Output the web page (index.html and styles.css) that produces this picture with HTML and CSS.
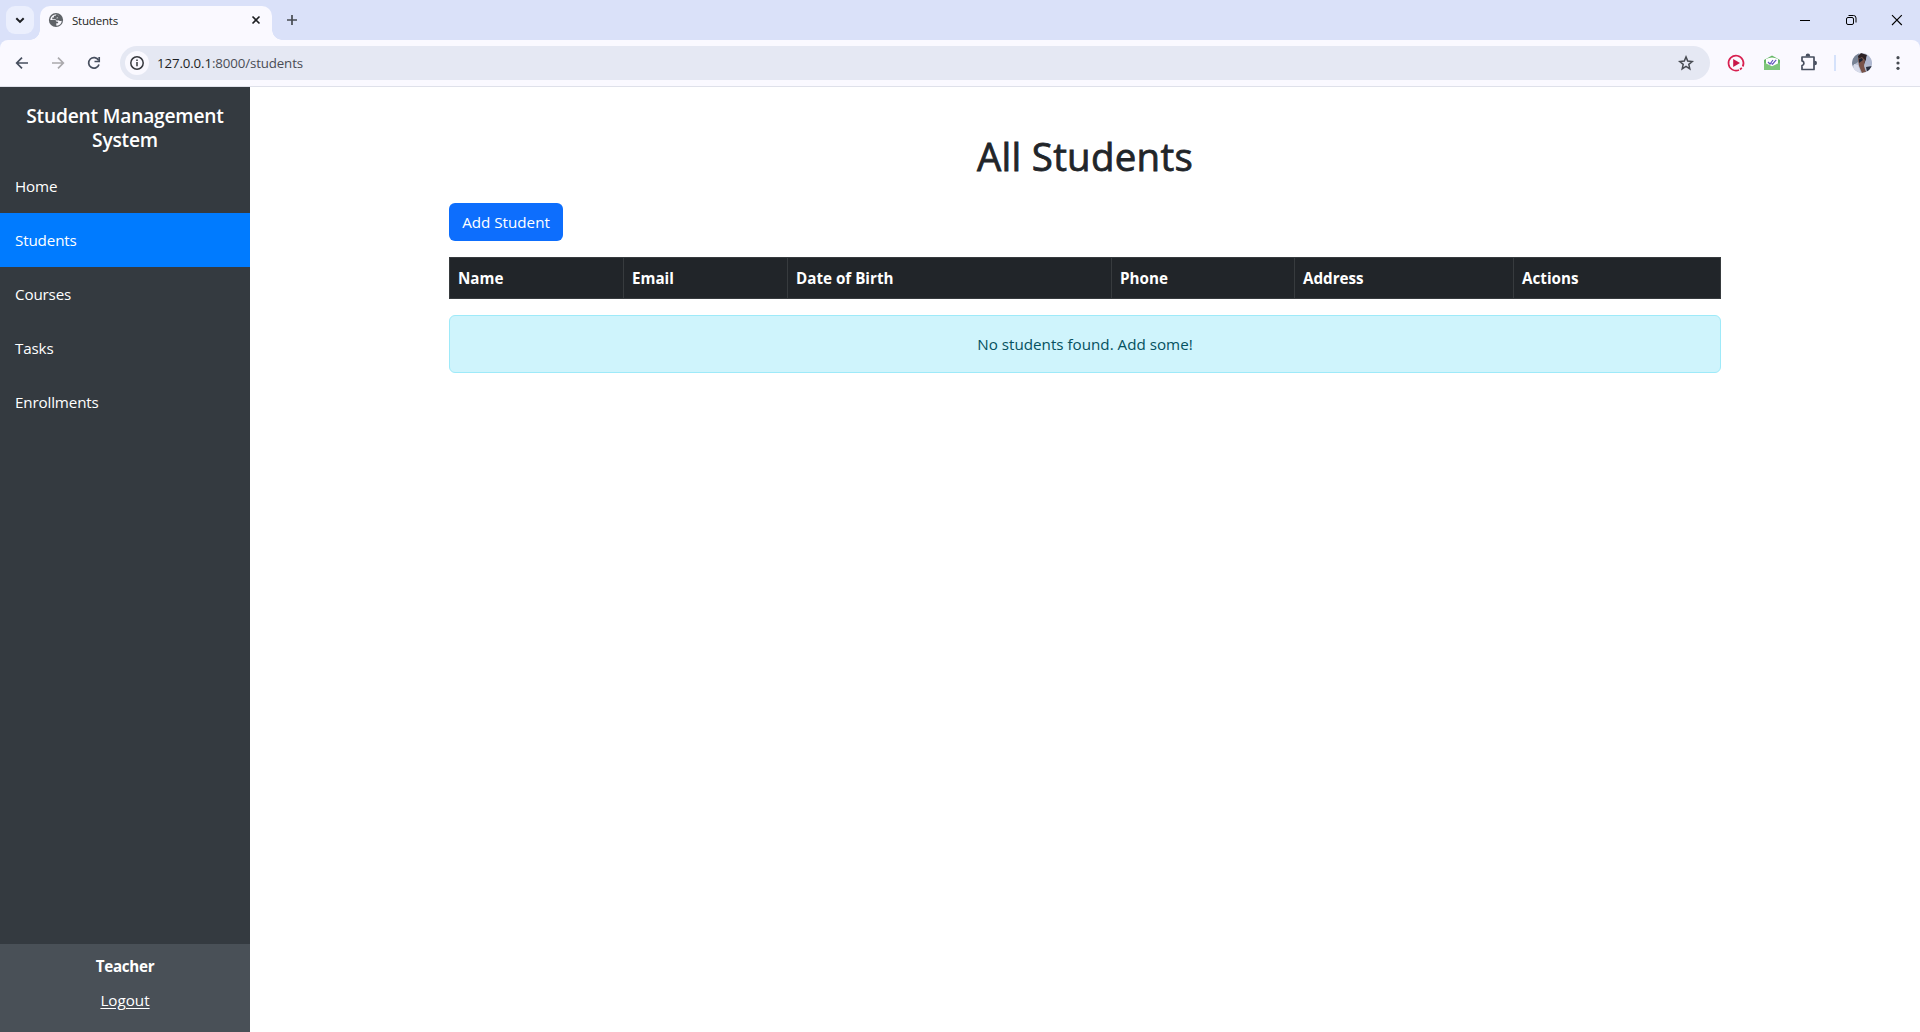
FILE: index.html
```html
<!DOCTYPE html>
<html lang="en">
<head>
<meta charset="utf-8">
<title>Students</title>
<link rel="stylesheet" href="styles.css">
</head>
<body>
<div class="browser">
  <header class="tabstrip">
    <div class="tab-search">
      <svg width="28" height="28" viewBox="0 0 28 28" fill="none" stroke="#1d1f23" stroke-width="2"><path d="M10.3 12.2 14 15.9l3.7-3.7"/></svg>
    </div>
    <div class="tab">
      <svg class="globe" width="16" height="16" viewBox="0 0 16 16"><circle cx="8" cy="8" r="7.1" fill="#5f6368"/><path d="M2.300 8h4.200c1.300 0 1.900.7 1.900 1.700h1.700v1.500H8.300v2.400c3 .3 5.300-2 5.400-4.900-1 .7-2.600.5-3.100-.7H8.500V6.300h1.700c0-1.100-.6-1.400-.3-2.100.2-.5.8-.7.8-1.200C7 1.200 2.600 3.500 2.300 8z" fill="#faf9ff"/><path d="M8.700 2.200 7.500 3.700H5.900v1.800H4.300v1.700h2.600c1.600 0 1.500 1.400 1.500 1.400h2.200V6.900H8.700V5.400h1.500V4l.7-1.200z" fill="#5f6368"/></svg>
      <span class="tab-title">Students</span>
      <svg class="tab-close" width="16" height="16" viewBox="0 0 16 16" stroke="#1d1f23" stroke-width="1.6"><path d="m4.500 4.500 7 7m0-7-7 7"/></svg>
    </div>
    <svg class="new-tab" width="16" height="16" viewBox="0 0 16 16" stroke="#474b52" stroke-width="1.7"><path d="M8 3v10M3 8h10"/></svg>
    <div class="window-controls">
      <svg width="46" height="40" viewBox="0 0 46 40" stroke="#000" fill="none"><path d="M18 20.500h10"/></svg>
      <svg width="46" height="40" viewBox="0 0 46 40" stroke="#000" fill="none"><rect x="18.500" y="17.500" width="7" height="7" rx="1.500"/><path d="M20.500 15.500h5a2.500 2.500 0 0 1 2.500 2.500v4.500"/></svg>
      <svg width="46" height="40" viewBox="0 0 46 40" stroke="#000" stroke-width="1.100" fill="none"><path d="m18 15.200 9.800 9.800m0-9.800L18 25"/></svg>
    </div>
  </header>
  <div class="toolbar">
    <svg class="tool" viewBox="0 0 36 36" stroke="#474f5f"><path d="M24 18H13m5-5.300L12.700 18l5.300 5.300"/></svg>
    <svg class="tool" viewBox="0 0 36 36" stroke="#aaa9ad"><path d="M12 18h11m-5-5.300 5.300 5.300-5.300 5.300"/></svg>
    <svg class="tool" viewBox="0 0 36 36" stroke="#474f5f"><path d="M22.600 15.300A5.300 5.300 0 1 0 23 19.500"/><path d="M23.200 12v4.500h-4.700"/></svg>
    <div class="omnibox">
      <span class="site-info"><svg width="24" height="24" viewBox="0 0 24 24" fill="none" stroke="#36383d" stroke-width="1.500"><circle cx="12" cy="12" r="6.200"/><path d="M12 11v4.200M12 8.400V10"/></svg></span>
      <span class="url"><span class="host">127.0.0.1</span>:8000/students</span>
      <svg class="star" width="20" height="20" viewBox="0 0 20 20" fill="none" stroke="#474b52" stroke-width="1.500" stroke-linejoin="miter"><path d="m10 3.900 1.700 4.200 4.500.4-3.400 2.900 1 4.400-3.800-2.400-3.800 2.400 1-4.400-3.400-2.900 4.500-.4z"/></svg>
    </div>
    <div class="actions">
      <svg class="tool" viewBox="0 0 36 36"><path d="M21 25A7.500 7.500 0 1 1 24.700 21.500" stroke="#d82050" stroke-width="1.700"/><path d="M22 24.500 23.800 22.900" stroke="#d82050"/><path d="M15.200 14v8l6.800-4z" fill="#c9184a"/></svg>
      <svg class="tool" viewBox="0 0 36 36"><path d="m10 15 8-4.500 8 4.500v4H10z" fill="#64b765"/><path d="M12 14q6-3 12 0v7H12z" fill="#fff"/><path d="m10 17.500 8 3.700 8-3.700V25H10z" fill="#7fc67b"/><path d="m14 17 2 2 3-4m-1.500 3.500 1 .7 3.700-4.400" stroke="#6255bd" stroke-width="1.200"/></svg>
      <svg class="tool" viewBox="0 0 36 36" stroke="#474f5f"><path d="M12 12h12v12.500H12v-3.900a2.400 2.400 0 0 0 0-4.700z" stroke-linejoin="round"/><path d="M15.700 11.500v-.7a2.200 2.200 0 0 1 4.400 0v.7zM24.300 15.800h.5a2.200 2.200 0 0 1 0 4.400h-.5z" fill="#474f5f" stroke="none"/></svg>
      <span class="divider"></span>
      <svg class="tool" viewBox="0 0 36 36"><defs><clipPath id="avatar"><circle cx="18" cy="18" r="10"/></clipPath></defs><g clip-path="url(#avatar)"><path d="M8 8h20v20H8z" fill="#b5bdcf"/><path d="M8 8h7l-1 9-6 4z" fill="#788395"/><path d="m14 11 3-3 6 2-1 5-2 4-5-1z" fill="#2b2024"/><path d="m14 14 4-2 3 3-1 6 2 6-4 1-3-7z" fill="#795349"/><path d="m15 14 3-1 1 2-4 3z" fill="#192230"/><path d="m10 19 4 1 3 8H9z" fill="#d7dbea"/><path d="m22 22 6-1v4l-5 2z" fill="#293040"/><path d="m23 10 5 5v6l-7-2z" fill="#aeb7d0"/></g></svg>
      <svg class="tool" viewBox="0 0 36 36" fill="#474b52"><circle cx="18" cy="12.700" r="1.600"/><circle cx="18" cy="18" r="1.600"/><circle cx="18" cy="23.300" r="1.600"/></svg>
    </div>
  </div>
  <div class="page">
    <aside class="sidebar">
      <h2 class="brand">Student Management<br>System</h2>
      <nav class="menu">
        <a class="menu-item">Home</a>
        <a class="menu-item active">Students</a>
        <a class="menu-item">Courses</a>
        <a class="menu-item">Tasks</a>
        <a class="menu-item">Enrollments</a>
      </nav>
      <div class="account">
        <strong class="role">Teacher</strong>
        <a class="logout">Logout</a>
      </div>
    </aside>
    <main class="content">
      <h1 class="heading">All Students</h1>
      <button class="add">Add Student</button>
      <table class="students">
        <colgroup><col class="c-name"><col class="c-email"><col class="c-birth"><col class="c-phone"><col class="c-address"><col></colgroup>
        <thead><tr><th>Name</th><th>Email</th><th>Date of Birth</th><th>Phone</th><th>Address</th><th>Actions</th></tr></thead>
      </table>
      <div class="alert">No students found. Add some!</div>
    </main>
  </div>
</div>
</body>
</html>
```
FILE: styles.css
```css
* { box-sizing: border-box; }
body {
  margin: 0;
  font-family: "Segoe UI", "Open Sans", "Noto Sans", sans-serif;
  font-size: 15.2px;
  line-height: 24px;
  color: #212529;
  background: #fff;
}
svg { display: block; flex: none; }
.browser { display: flex; flex-direction: column; height: 1032px; background: #dae1f9; }

/* Tab strip */
.tabstrip { display: flex; height: 40px; align-items: center; padding-left: 6px; }
.tab-search { width: 28px; height: 28px; border-radius: 9px; background: #ebeffd; margin-right: 6px; }
.tab {
  position: relative;
  display: flex;
  align-items: center;
  align-self: flex-end;
  width: 232px;
  height: 34px;
  padding: 0 8px 6px;
  border-radius: 10px 10px 0 0;
  background: #faf9ff;
}
.tab::before, .tab::after { content: ""; position: absolute; bottom: 0; width: 10px; height: 10px; }
.tab::before { left: -10px; background: radial-gradient(circle at 0 0, transparent 9.500px, #faf9ff 10px); }
.tab::after { right: -10px; background: radial-gradient(circle at 100% 0, transparent 9.500px, #faf9ff 10px); }
.tab-title { margin-left: 8px; flex: 1; font-size: 11.5px; line-height: 16px; letter-spacing: -.2px; padding-top: 1px; color: #1d1f23; }
.new-tab { margin-left: 12px; }
.window-controls { display: flex; margin-left: auto; }

/* Toolbar */
.toolbar {
  display: flex;
  align-items: center;
  height: 47px;
  padding: 0 4px;
  border-bottom: 1px solid #dfe1ea;
  border-radius: 8px 8px 0 0;
  background: #faf9ff;
}
.tool { width: 36px; height: 36px; fill: none; stroke-width: 1.7; }
.tool[fill] { fill: #474b52; }
.omnibox { display: flex; align-items: center; flex: 1; height: 34px; margin: 0 8px; padding: 0 14px 0 5px; border-radius: 17px; background: #e5e8f3; }
.site-info { width: 24px; height: 24px; border-radius: 50%; background: #faf9ff; }
.url { margin-left: 8px; flex: 1; font-size: 13.3px; letter-spacing: -.13px; color: #4a4d55; }
.host { color: #1d1f23; }
.actions { display: flex; align-items: center; }
.divider { width: 2px; height: 16px; margin: 0 8px; background: #d5e2fb; }

/* Page */
.page { display: flex; flex: 1; background: #fff; }
.sidebar { display: flex; flex-direction: column; width: 250px; background: #343a40; color: #fff; }
.brand { margin: 0; padding: 17px 0 7px; height: 72px; font-size: 19.2px; font-weight: 600; line-height: 24px; letter-spacing: -.2px; text-align: center; }
.menu { display: flex; flex-direction: column; flex: 1; }
.menu-item { height: 54px; padding: 15px; letter-spacing: -.15px; }
.active { background: #007bff; }
.account { display: flex; flex-direction: column; align-items: center; gap: 10px; height: 88px; padding-top: 10px; background: #495057; }
.role { font-weight: 700; letter-spacing: -.3px; }
.logout { text-decoration: underline; text-underline-offset: 2px; }
.content { width: 1272px; margin: 0 auto; padding-top: 45px; }
.heading { margin: 0 0 23px; font-size: 38.4px; line-height: 48px; font-weight: 500; letter-spacing: .3px; -webkit-text-stroke: .8px #212529; text-align: center; }
.add { display: block; width: 114px; height: 38px; padding: 0; border: 0; border-radius: 6px; background: #0d6efd; color: #fff; font: inherit; }
.students { width: 100%; height: 42px; margin: 16px 0; table-layout: fixed; border-collapse: collapse; background: #212529; color: #fff; }
.students th { padding: 8px; border: 1px solid #373b3e; text-align: left; font-weight: 700; line-height: 24px; }
.c-name { width: 174px; }
.c-email { width: 164px; }
.c-birth { width: 324px; }
.c-phone { width: 183px; }
.c-address { width: 219px; }
.alert { height: 58px; padding: 16px; border: 1px solid #9eeaf9; border-radius: 6px; background: #cff4fc; color: #055160; text-align: center; }
```
